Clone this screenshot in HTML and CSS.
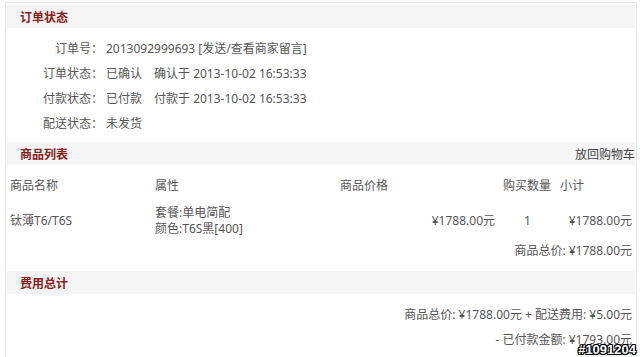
FILE: index.html
```html
<!DOCTYPE html>
<html lang="zh-CN">
<head>
  <meta charset="UTF-8" />
  <title>订单详情</title>
  <link rel="stylesheet" href="styles.css">
</head>
<body>
  <div class="order-box">
    <div class="section-title"><span>订单状态</span></div>
    <div class="status-list">
      <div class="status-row"><span class="label">订单号：</span><span class="value">2013092999693 [发送/查看商家留言]</span></div>
      <div class="status-row"><span class="label">订单状态：</span><span class="value">已确认<span class="gap"></span>确认于 2013-10-02 16:53:33</span></div>
      <div class="status-row"><span class="label">付款状态：</span><span class="value">已付款<span class="gap"></span>付款于 2013-10-02 16:53:33</span></div>
      <div class="status-row"><span class="label">配送状态：</span><span class="value">未发货</span></div>
    </div>

    <div class="section-title"><span>商品列表</span><a class="back-cart" href="#">放回购物车</a></div>
    <div class="goods-table">
      <div class="goods-head">
        <div class="col-name">商品名称</div>
        <div class="col-attr">属性</div>
        <div class="col-price">商品价格</div>
        <div class="col-qty">购买数量</div>
        <div class="col-sub">小计</div>
      </div>
      <div class="goods-row">
        <div class="col-name">钛薄T6/T6S</div>
        <div class="col-attr">套餐:单电简配<br>颜色:T6S黑[400]</div>
        <div class="col-price">¥1788.00元</div>
        <div class="col-qty">1</div>
        <div class="col-sub">¥1788.00元</div>
      </div>
    </div>
    <div class="sum-line goods-total">商品总价: ¥1788.00元</div>

    <div class="section-title"><span>费用总计</span></div>
    <div class="fee-list">
      <div class="sum-line">商品总价: ¥1788.00元 + 配送费用: ¥5.00元</div>
      <div class="sum-line">- 已付款金额: ¥1793.00元</div>
    </div>
  </div>
  <div class="watermark">#1091204</div>
</body>
</html>
```

FILE: styles.css
```css
* { box-sizing: border-box; margin: 0; padding: 0; }
html, body { background: #fff; }
body {
  font-family: "Noto Sans", "Noto Sans CJK SC", sans-serif;
  font-size: 12px; color: #555; overflow: hidden; height: 357px; position: relative;
}

.order-box {
  margin: 2px 3px 0 5px; padding: 2px 1px 0 1px;
  border: 1px solid #e6e6e6; border-bottom: none; height: 360px;
}

.section-title {
  height: 23px; background: #f5f5f5; padding: 0 0 0 13px;
  display: flex; align-items: center; justify-content: space-between;
}
.section-title span { color: #8b1a1a; font-weight: 700; }
.back-cart { color: #444; text-decoration: none; }

.status-list { padding: 7px 0 7px; }
.status-row { display: flex; height: 25px; align-items: center; }
.status-row .label { width: 96px; text-align: right; }
.status-row .value { padding-left: 3px; }
.gap { display: inline-block; width: 12px; }

.goods-head, .goods-row { display: grid; grid-template-columns: 145px 185px 161px 59px 1fr; align-items: center; }
.goods-head { height: 40px; }
.goods-row { height: 28px; line-height: 16px; }
.goods-head > div, .goods-row > div { padding: 0 3px; }
.goods-head .col-qty { padding-left: 5px; }
.goods-row .col-price, .goods-row .col-sub { text-align: right; }
.goods-row .col-qty { text-align: center; }

.sum-line { height: 25px; line-height: 25px; text-align: right; padding-right: 3px; }
.goods-total { margin: 5px 0 8px; }
.fee-list { padding-top: 8px; }

.watermark {
  position: absolute; right: 4px; bottom: 0px;
  font-family: "Liberation Sans", sans-serif; font-size: 13px; font-weight: 700; color: #fff;
  text-shadow: -1px 0 #000, 1px 0 #000, 0 -1px #000, 0 1px #000, 1px 1px #000, -1px -1px #000, 1px -1px #000, -1px 1px #000;
}
```
